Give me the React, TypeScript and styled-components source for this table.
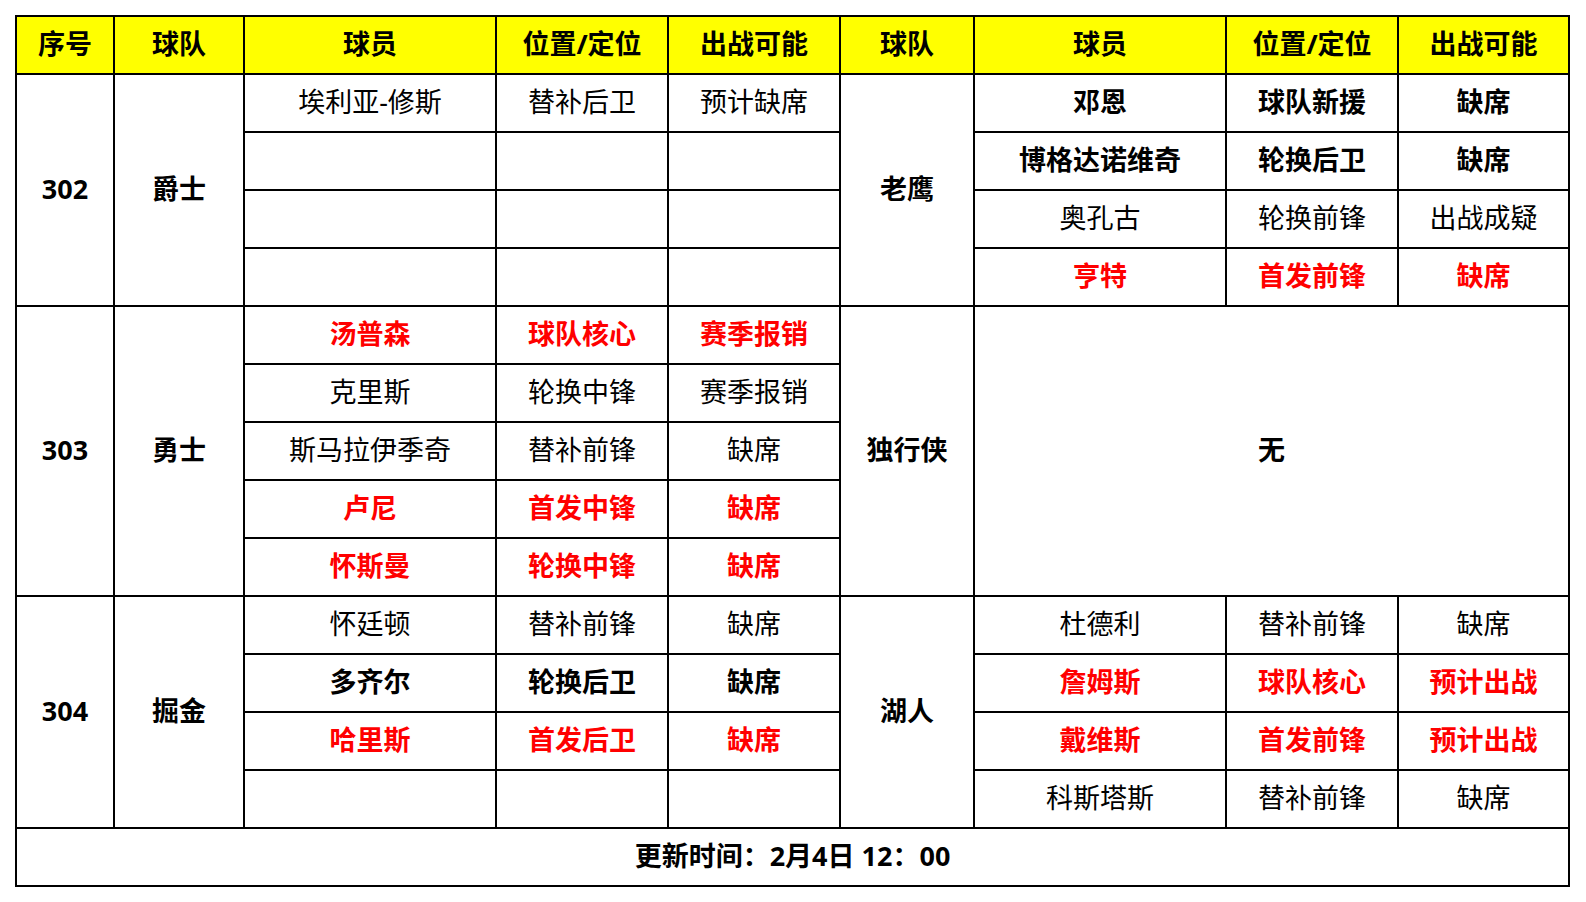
import React from 'react';
import styled, { createGlobalStyle } from 'styled-components';

const GlobalStyle = createGlobalStyle`
  html, body {
    margin: 0;
    padding: 0;
    background: #ffffff;
  }
  body {
    font-family: "Noto Sans", "Noto Sans CJK SC", sans-serif;
  }
`;

const Page = styled.div`
  padding: 15px 0 0 15px;
`;

// black background + 2px gap gives the ruled lines of the sheet
const Sheet = styled.div`
  display: inline-grid;
  grid-template-columns: 96px 128px 250px 170px 170px 132px 250px 170px 169px;
  grid-auto-rows: 56px;
  gap: 2px;
  padding: 2px;
  background: #000000;
`;

type Tone = 'plain' | 'bold' | 'red';

const Cell = styled.div<{ $tone?: Tone; $rows?: number; $cols?: number }>`
  display: flex;
  align-items: center;
  justify-content: center;
  padding-bottom: 3px;
  background: #ffffff;
  font-size: 27px;
  line-height: 1;
  white-space: nowrap;
  color: ${({ $tone }) => ($tone === 'red' ? '#ff0000' : '#000000')};
  font-weight: ${({ $tone }) => ($tone === 'bold' || $tone === 'red' ? 700 : 400)};
  grid-row: ${({ $rows }) => ($rows ? `span ${$rows}` : 'auto')};
  grid-column: ${({ $cols }) => ($cols ? `span ${$cols}` : 'auto')};
`;

const HeadCell = styled(Cell)`
  background: #ffff00;
  font-weight: 700;
`;

const Footer = styled(Cell)`
  grid-column: 1 / -1;
  font-weight: 700;
`;

type Player = [string, string, string, Tone] | null;

interface Block {
  no: string;
  home: string;
  homeRows: Player[];
  away: string;
  awayRows: Player[] | null;
}

const blocks: Block[] = [
  {
    no: '302',
    home: '爵士',
    homeRows: [['埃利亚-修斯', '替补后卫', '预计缺席', 'plain'], null, null, null],
    away: '老鹰',
    awayRows: [
      ['邓恩', '球队新援', '缺席', 'bold'],
      ['博格达诺维奇', '轮换后卫', '缺席', 'bold'],
      ['奥孔古', '轮换前锋', '出战成疑', 'plain'],
      ['亨特', '首发前锋', '缺席', 'red'],
    ],
  },
  {
    no: '303',
    home: '勇士',
    homeRows: [
      ['汤普森', '球队核心', '赛季报销', 'red'],
      ['克里斯', '轮换中锋', '赛季报销', 'plain'],
      ['斯马拉伊季奇', '替补前锋', '缺席', 'plain'],
      ['卢尼', '首发中锋', '缺席', 'red'],
      ['怀斯曼', '轮换中锋', '缺席', 'red'],
    ],
    away: '独行侠',
    awayRows: null,
  },
  {
    no: '304',
    home: '掘金',
    homeRows: [
      ['怀廷顿', '替补前锋', '缺席', 'plain'],
      ['多齐尔', '轮换后卫', '缺席', 'bold'],
      ['哈里斯', '首发后卫', '缺席', 'red'],
      null,
    ],
    away: '湖人',
    awayRows: [
      ['杜德利', '替补前锋', '缺席', 'plain'],
      ['詹姆斯', '球队核心', '预计出战', 'red'],
      ['戴维斯', '首发前锋', '预计出战', 'red'],
      ['科斯塔斯', '替补前锋', '缺席', 'plain'],
    ],
  },
];

const headers = ['序号', '球队', '球员', '位置/定位', '出战可能', '球队', '球员', '位置/定位', '出战可能'];

function PlayerCells({ p }: { p: Player }) {
  const tone: Tone = p ? p[3] : 'plain';
  return (
    <>
      {[0, 1, 2].map((i) => (
        <Cell key={i} $tone={tone}>
          {p ? p[i] : ''}
        </Cell>
      ))}
    </>
  );
}

// cells are listed in reading order; grid auto-placement skips the spanned ones
function TeamBlock({ b }: { b: Block }) {
  const span = b.homeRows.length;
  return (
    <>
      {b.homeRows.map((p, i) => (
        <React.Fragment key={i}>
          {i === 0 && (
            <>
              <Cell $tone="bold" $rows={span}>{b.no}</Cell>
              <Cell $tone="bold" $rows={span}>{b.home}</Cell>
            </>
          )}
          <PlayerCells p={p} />
          {i === 0 && <Cell $tone="bold" $rows={span}>{b.away}</Cell>}
          {b.awayRows ? (
            <PlayerCells p={b.awayRows[i] ?? null} />
          ) : (
            i === 0 && (
              <Cell $tone="bold" $rows={span} $cols={3}>
                无
              </Cell>
            )
          )}
        </React.Fragment>
      ))}
    </>
  );
}

export default function App() {
  return (
    <Page>
      <GlobalStyle />
      <Sheet>
        {headers.map((h, i) => (
          <HeadCell key={i}>{h}</HeadCell>
        ))}
        {blocks.map((b) => (
          <TeamBlock key={b.no} b={b} />
        ))}
        <Footer>更新时间：2月4日 12：00</Footer>
      </Sheet>
    </Page>
  );
}
